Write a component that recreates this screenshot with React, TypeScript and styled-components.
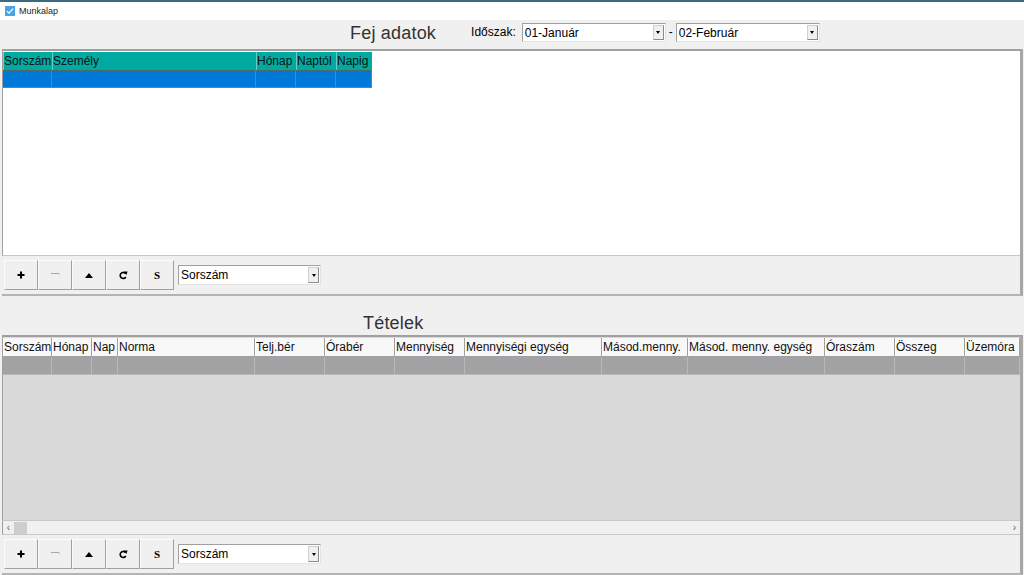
import React from "react";
import styled, { createGlobalStyle } from "styled-components";

const GlobalStyle = createGlobalStyle`
  html, body {
    margin: 0;
    padding: 0;
    background: #f0f0f0;
    font-family: "Liberation Sans", Arial, sans-serif;
    font-size: 12px;
    color: #000;
  }
  * { box-sizing: border-box; }
`;

const upperColumns = [
  { title: "Sorszám", width: 49 },
  { title: "Személy", width: 204 },
  { title: "Hónap", width: 40 },
  { title: "Naptól", width: 40 },
  { title: "Napig", width: 36 },
];

const lowerColumns = [
  { title: "Sorszám", width: 49 },
  { title: "Hónap", width: 40 },
  { title: "Nap", width: 26 },
  { title: "Norma", width: 137 },
  { title: "Telj.bér", width: 70 },
  { title: "Órabér", width: 70 },
  { title: "Mennyiség", width: 70 },
  { title: "Mennyiségi egység", width: 137 },
  { title: "Másod.menny.", width: 86 },
  { title: "Másod. menny. egység", width: 137 },
  { title: "Óraszám", width: 70 },
  { title: "Összeg", width: 70 },
  { title: "Üzemóra", width: 55 },
];

const Window = styled.div`
  width: 1024px;
  height: 575px;
  overflow: hidden;
  display: flex;
  flex-direction: column;
  background: #f0f0f0;
`;

const TitleBar = styled.div`
  height: 20px;
  flex: none;
  background: #fff;
  border-top: 2px solid #3b6b7e;
  display: flex;
  align-items: center;
  gap: 4px;
  padding-left: 5px;
  font-size: 9px;
  color: #222;
`;

const CheckIcon = styled.span`
  width: 10px;
  height: 10px;
  background: #4aa3e6;
  display: inline-flex;
  align-items: center;
  justify-content: center;
`;

const HeaderRow = styled.div`
  height: 29px;
  flex: none;
  display: flex;
  align-items: flex-start;
  padding: 3px 0 0 350px;
`;

const SectionTitle = styled.div<{ $indent: number }>`
  font-size: 18px;
  line-height: 20px;
  color: #333;
  padding-left: ${(p) => p.$indent}px;
  letter-spacing: 0.2px;
`;

const PeriodLabel = styled.span`
  margin: 0 6px 0 35px;
  line-height: 19px;
  font-size: 12px;
`;

const Dash = styled.span`
  margin: 0 3px;
  line-height: 19px;
`;

const Combo = styled.div<{ $w: number; $h: number }>`
  width: ${(p) => p.$w}px;
  height: ${(p) => p.$h}px;
  background: #fff;
  border: 1px solid #a0a0a0;
  border-right-color: #e3e3e3;
  border-bottom-color: #e3e3e3;
  display: flex;
  align-items: center;
  font-size: 12px;
`;

const ComboText = styled.span`
  flex: 1;
  padding-left: 2px;
`;

const ComboButton = styled.span`
  width: 11px;
  height: calc(100% - 2px);
  margin-right: 1px;
  background: #f0f0f0;
  border: 1px solid #d0d0d0;
  border-right-color: #8a8a8a;
  border-bottom-color: #8a8a8a;
  display: flex;
  align-items: center;
  justify-content: center;
  &::after {
    content: "";
    border-left: 2px solid transparent;
    border-right: 2px solid transparent;
    border-top: 3px solid #000;
  }
`;

const Panel = styled.div<{ $h: number }>`
  height: ${(p) => p.$h}px;
  flex: none;
  margin: 0 1px 0 2px;
  border-top: 2px solid #a0a0a0;
  border-right: 3px solid #a6a6a6;
  border-bottom: 2px solid #b4b4b4;
  display: flex;
  flex-direction: column;
`;

const GridArea = styled.div<{ $bg: string }>`
  flex: 1;
  background: ${(p) => p.$bg};
  border-left: 1px solid #a0a0a0;
  border-bottom: 1px solid #c8c8c8;
  padding-top: 1px;
  overflow: hidden;
`;

const Row = styled.div<{ $h: number }>`
  display: flex;
  height: ${(p) => p.$h}px;
`;

const HeadCell = styled.div<{ $w: number; $teal?: boolean }>`
  width: ${(p) => p.$w}px;
  flex: none;
  background: ${(p) => (p.$teal ? "#00aaa0" : "#f8f8f8")};
  border-right: 1px solid ${(p) => (p.$teal ? "#5f7e7c" : "#a0a0a0")};
  border-bottom: 1px solid ${(p) => (p.$teal ? "#4d6a68" : "#a0a0a0")};
  box-shadow: inset 1px 0 0 ${(p) => (p.$teal ? "#5fcfc7" : "#ffffff")};
  padding-left: 1px;
  line-height: 18px;
  font-size: 12px;
  white-space: nowrap;
  overflow: hidden;
  color: #111;
`;

const DataCell = styled.div<{ $w: number; $bg: string; $line: string }>`
  width: ${(p) => p.$w}px;
  flex: none;
  background: ${(p) => p.$bg};
  border-right: 1px solid ${(p) => p.$line};
  border-bottom: 1px solid ${(p) => p.$line};
`;

const ScrollBar = styled.div`
  height: 14px;
  flex: none;
  background: #f0f0f0;
  border-left: 1px solid #a0a0a0;
  border-bottom: 1px solid #c8c8c8;
  display: flex;
  align-items: center;
  font-size: 10px;
  color: #606060;
`;

const ScrollArrow = styled.span`
  width: 11px;
  text-align: center;
`;

const ScrollThumb = styled.span`
  width: 13px;
  height: 12px;
  background: #cdcdcd;
`;

const ScrollTrack = styled.span`
  flex: 1;
`;

const Toolbar = styled.div`
  height: 38px;
  flex: none;
  display: flex;
  align-items: center;
  padding-left: 2px;
`;

const ToolButton = styled.button`
  width: 34px;
  height: 30px;
  margin: 0;
  padding: 0;
  background: #f0f0f0;
  border: 1px solid #fcfcfc;
  border-right-color: #a0a0a0;
  border-bottom-color: #a0a0a0;
  display: flex;
  align-items: center;
  justify-content: center;
  font-family: "Liberation Serif", serif;
  font-weight: bold;
  font-size: 11px;
  color: #000;
`;

const ComboSlot = styled.div`
  margin-left: 4px;
`;

const MainColumn = styled.div`
  flex: 1;
  display: flex;
  flex-direction: column;
`;

const TitleRow = styled.div`
  height: 39px;
  flex: none;
  display: flex;
  align-items: flex-end;
  padding-bottom: 2px;
`;

function Plus() {
  return (
    <svg width="8" height="8" viewBox="0 0 8 8">
      <rect x="3" y="0.5" width="2" height="7" fill="#000" />
      <rect x="0.5" y="3" width="7" height="2" fill="#000" />
    </svg>
  );
}

function Minus() {
  return (
    <svg width="9" height="4" viewBox="0 0 9 4">
      <rect x="0" y="0" width="9" height="1" fill="#a8a8a8" />
      <rect x="8" y="0" width="1" height="3" fill="#d8d8d8" />
    </svg>
  );
}

function Up() {
  return (
    <svg width="8" height="5" viewBox="0 0 8 5">
      <polygon points="4,0 8,5 0,5" fill="#000" />
    </svg>
  );
}

function Refresh() {
  return (
    <svg width="9" height="10" viewBox="0 0 9 10">
      <path d="M6.4 3.4 A3 3 0 1 0 6.8 7" fill="none" stroke="#000" strokeWidth="1.6" />
      <polygon points="4.2,1.6 8.6,1.4 7.4,5" fill="#000" />
    </svg>
  );
}

function GridToolbar() {
  return (
    <Toolbar>
      <ToolButton><Plus /></ToolButton>
      <ToolButton><Minus /></ToolButton>
      <ToolButton><Up /></ToolButton>
      <ToolButton><Refresh /></ToolButton>
      <ToolButton>S</ToolButton>
      <ComboSlot>
        <Combo $w={143} $h={20}>
          <ComboText>Sorszám</ComboText>
          <ComboButton />
        </Combo>
      </ComboSlot>
    </Toolbar>
  );
}

export default function App() {
  return (
    <Window>
      <GlobalStyle />
      <TitleBar>
        <CheckIcon>
          <svg width="8" height="8" viewBox="0 0 8 8">
            <path d="M1 4.2 L3.1 6.2 L7 1.6" fill="none" stroke="#fff" strokeWidth="1.2" />
          </svg>
        </CheckIcon>
        Munkalap
      </TitleBar>
      <MainColumn>
        <HeaderRow>
          <SectionTitle $indent={0}>Fej adatok</SectionTitle>
          <PeriodLabel>Időszak:</PeriodLabel>
          <Combo $w={144} $h={19}>
            <ComboText>01-Január</ComboText>
            <ComboButton />
          </Combo>
          <Dash>-</Dash>
          <Combo $w={144} $h={19}>
            <ComboText>02-Február</ComboText>
            <ComboButton />
          </Combo>
        </HeaderRow>

        <Panel $h={247}>
          <GridArea $bg="#ffffff">
            <Row $h={19}>
              {upperColumns.map((c) => (
                <HeadCell key={c.title} $w={c.width} $teal>
                  {c.title}
                </HeadCell>
              ))}
            </Row>
            <Row $h={17}>
              {upperColumns.map((c) => (
                <DataCell key={c.title} $w={c.width} $bg="#0078d7" $line="#2f8fdf" />
              ))}
            </Row>
          </GridArea>
          <GridToolbar />
        </Panel>

        <TitleRow>
          <SectionTitle $indent={363}>Tételek</SectionTitle>
        </TitleRow>

        <Panel $h={240}>
          <GridArea $bg="#d9d9d9">
            <Row $h={19}>
              {lowerColumns.map((c) => (
                <HeadCell key={c.title} $w={c.width}>
                  {c.title}
                </HeadCell>
              ))}
            </Row>
            <Row $h={18}>
              {lowerColumns.map((c) => (
                <DataCell key={c.title} $w={c.width} $bg="#a3a3a6" $line="#b9b9bb" />
              ))}
            </Row>
          </GridArea>
          <ScrollBar>
            <ScrollArrow>&lsaquo;</ScrollArrow>
            <ScrollThumb />
            <ScrollTrack />
            <ScrollArrow>&rsaquo;</ScrollArrow>
          </ScrollBar>
          <GridToolbar />
        </Panel>
      </MainColumn>
    </Window>
  );
}
